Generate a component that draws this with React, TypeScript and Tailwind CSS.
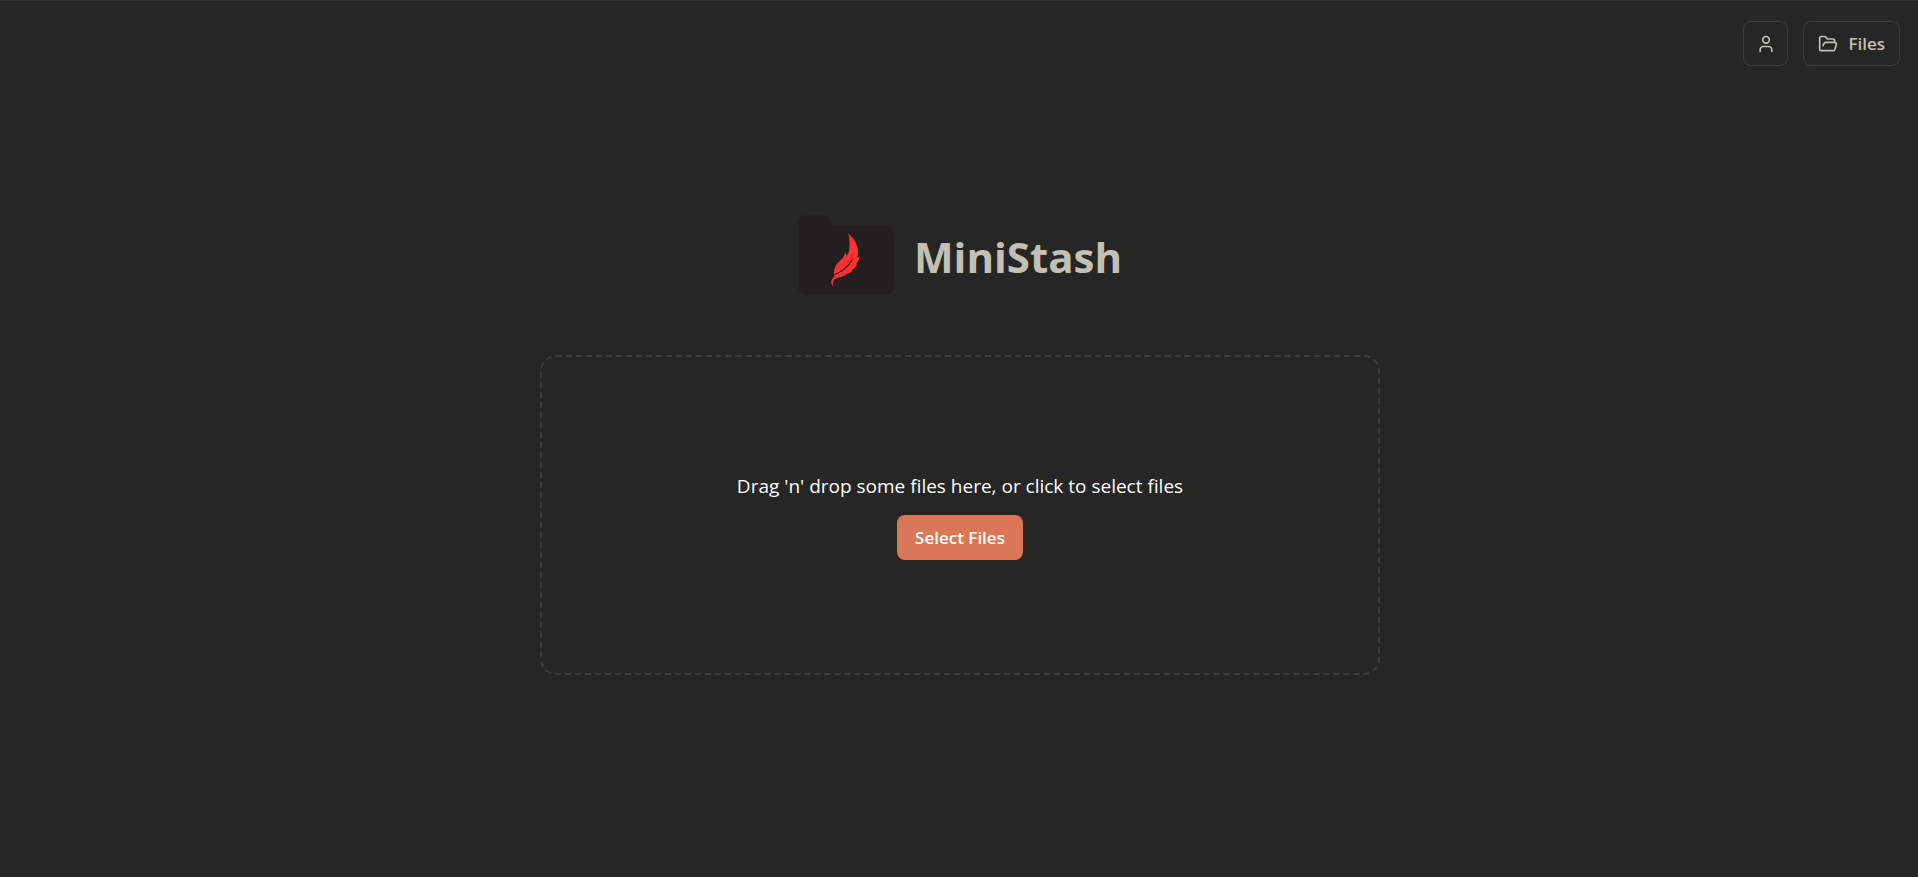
import { useRef } from 'react'
import { FolderOpen, User } from 'lucide-react'

const Logo = () => (
  <svg viewBox="0 0 96 80" className="h-20 w-24" aria-hidden="true">
    <path
      fill="#231f20"
      d="M0 9.500C0 4 4 0 9.500 0H25c4.500 0 7.500 2.500 9 6.500.8 2.200 1.500 4.200 4 4.200h48.500c5.500 0 9.500 4 9.500 9.500v50.300c0 5.500-4 9.500-9.500 9.500h-77C4 80 0 76 0 70.500V9.500Z"
    />
    {/* feather */}
    <path
      fill="#ff3131"
      d="M50.300 18.300C54 21.500 57.500 26 59.200 31.500c1.100 3.800 1.100 7.500 0 11.300l2.400-1.600c-.4 3-1.500 5.500-3.800 8l1.300-.2c-1.300 2.700-3.300 4.900-5.800 6.600l1.200.3c-2.800 2.500-5 2.300-7.500 3.300l1.500.3c-4 2.700-8 2.500-10.700 4-2.700 1.500-3 4.500-3.200 8.200-1.800-3.500-1.900-6.500.6-9 .3-.3.700-.6 1.100-.9-1.300-5.800.8-10.800 3.900-14.300 2.400-2.500 5.700-5 7.400-10.200l.8 3.400c1.700-1.700 2.700-3.700 2.900-6.200.3-5.500.6-10.500-1-16.200Z"
    />
    <path
      fill="none"
      stroke="#231f20"
      strokeWidth="1.200"
      d="M34.500 60.500C44.500 57 50.500 51.500 54.500 44.500"
    />
  </svg>
)

const outlineButton = 'flex h-[45px] items-center justify-center rounded-lg border border-[#3e3e38] text-[#c3c0b6]'

const App = () => {
  const inputRef = useRef<HTMLInputElement>(null)

  const openPicker = () => inputRef.current?.click()

  return (
    <div className="flex min-h-screen flex-col border-t border-[#313133] bg-[#262624] font-['Open_Sans','Noto_Sans',sans-serif]">
      <header className="flex justify-end gap-[15px] pt-5 pr-[18px]">
        <button type="button" aria-label="Account" className={`${outlineButton} w-[45px]`}>
          <User size={20} />
        </button>
        <a href="#files" className={`${outlineButton} gap-[10px] px-[14px] text-[17px] font-semibold`}>
          <FolderOpen size={20} />
          Files
        </a>
      </header>

      <main className="flex flex-col items-center pt-[149px] pr-5 pl-[22px]">
        <div className="flex items-center gap-5">
          <Logo />
          <h1 className="pt-1 text-[42px] leading-[50px] font-bold text-[#c3c0b6]">MiniStash</h1>
        </div>

        <div className="mt-[60px] flex h-80 w-full max-w-[840px] flex-col items-center justify-center gap-[13px] rounded-2xl border-2 border-dashed border-[#3e3e38]">
          <input ref={inputRef} type="file" multiple aria-label="Files" className="hidden" />
          <p className="text-[19px] leading-[32px] text-white">
            Drag 'n' drop some files here, or click to select files
          </p>
          <button
            type="button"
            onClick={openPicker}
            className="h-[45px] rounded-lg bg-[#d97757] px-[18px] text-[17px] font-semibold text-white"
          >
            Select Files
          </button>
        </div>
      </main>
    </div>
  )
}

export default App
